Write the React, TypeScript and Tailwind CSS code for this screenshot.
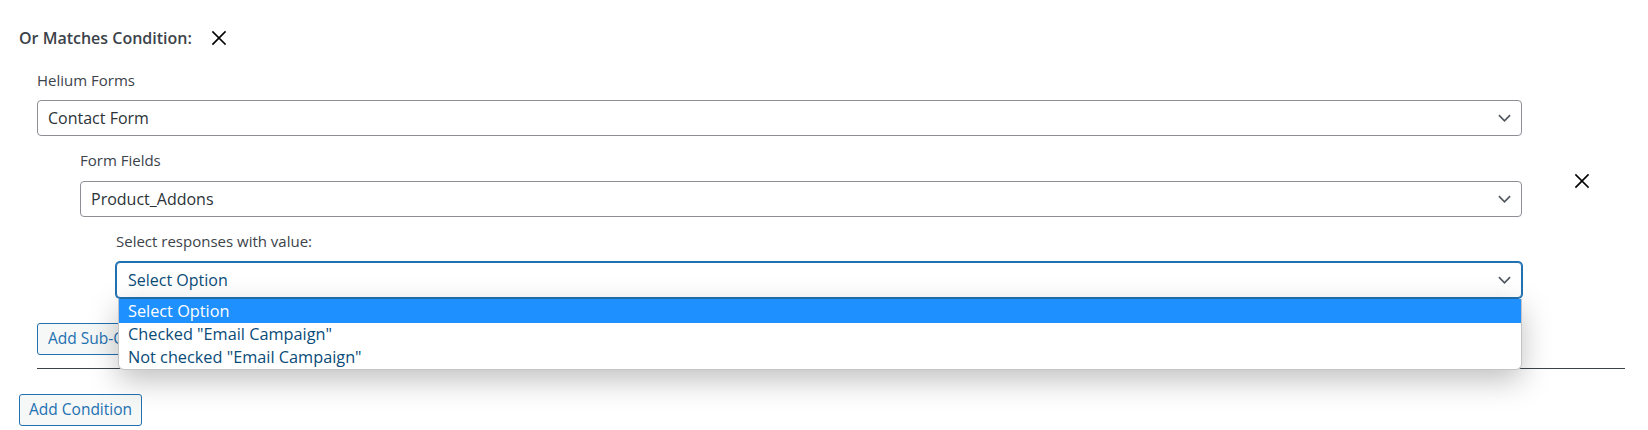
import React from "react";

function CloseIcon({ className }: { className?: string }) {
  return (
    <svg viewBox="0 0 16 16" className={className} fill="none" stroke="currentColor" strokeWidth="1.7" strokeLinecap="square">
      <path d="M2 2L14 14M14 2L2 14" />
    </svg>
  );
}

function Chevron() {
  return (
    <svg viewBox="0 0 14 8" className="w-[13px] h-[8px] text-[#50575e]" fill="none" stroke="currentColor" strokeWidth="1.8">
      <path d="M1 1L7 7L13 1" />
    </svg>
  );
}

function SelectBox({ value, focused }: { value: string; focused?: boolean }) {
  return (
    <div
      className={
        focused
          ? "flex items-center justify-between h-[36px] pl-[11px] pr-[10px] rounded-[4px] border border-[#2271b1] shadow-[0_0_0_1px_#2271b1] bg-white text-[16px] text-[#0a4b78]"
          : "flex items-center justify-between h-[36px] pl-[10px] pr-[10px] rounded-[4px] border border-[#8c8f94] bg-white text-[16px] text-[#2c3338]"
      }
    >
      <span>{value}</span>
      <Chevron />
    </div>
  );
}

const options = ["Select Option", 'Checked "Email Campaign"', 'Not checked "Email Campaign"'];

export default function App() {
  return (
    <div className="w-[1648px] h-[430px] bg-white pl-[19px] pt-[24px] font-['Open_Sans',sans-serif] overflow-hidden">
      {/* Heading */}
      <div className="flex items-center h-[28px]">
        <span className="text-[16px] font-semibold text-[#3c434a]">Or Matches Condition:</span>
        <CloseIcon className="w-[16px] h-[16px] ml-[19px] text-black" />
      </div>

      {/* Condition block */}
      <div className="ml-[18px] mt-[18px] w-[1588px]">
        <div className="flex">
          <div className="w-[1485px]">
            <div className="text-[15px] text-[#3c434a] h-[20px] leading-[20px]">Helium Forms</div>
            <div className="mt-[10px]">
              <SelectBox value="Contact Form" />
            </div>

            <div className="ml-[43px] mt-[14px]">
              <div className="text-[15px] text-[#3c434a] h-[20px] leading-[20px]">Form Fields</div>
              <div className="mt-[11px]">
                <SelectBox value="Product_Addons" />
              </div>

              <div className="ml-[36px] mt-[14px]">
                <div className="text-[15px] text-[#3c434a] h-[20px] leading-[20px]">Select responses with value:</div>
                <div className="relative mt-[11px]">
                  <SelectBox value="Select Option" focused />
                  {/* open dropdown */}
                  <div className="absolute left-[2px] right-0 top-[37px] z-10 bg-white rounded-b-[6px] border border-[#c3c4c7] border-t-0 shadow-[0_10px_30px_rgba(0,0,0,0.25)] overflow-hidden text-[16.3px] text-[#0a4b78]">
                    {options.map((o, i) => (
                      <div
                        key={o}
                        className={
                          i === 0
                            ? "h-[24px] leading-[24px] pl-[9px] bg-[#1e90ff] text-white"
                            : "h-[23px] leading-[23px] pl-[9px]"
                        }
                      >
                        {o}
                      </div>
                    ))}
                  </div>
                </div>
              </div>
            </div>
          </div>
          <div className="pt-[103px] pl-[52px]">
            <CloseIcon className="w-[16px] h-[16px] text-black" />
          </div>
        </div>

        <div className="mt-[25px]">
          <button className="h-[32px] px-[10px] rounded-[3px] border border-[#2271b1] bg-[#f6f7f7] text-[15.5px] text-[#2271b1]">
            Add Sub-Condition
          </button>
        </div>
        <div className="mt-[13px] h-px bg-[#3c434a]" />
      </div>

      <div className="mt-[25px]">
        <button className="h-[32px] px-[9px] rounded-[3px] border border-[#2271b1] bg-[#f6f7f7] text-[15.5px] text-[#2271b1]">
          Add Condition
        </button>
      </div>
    </div>
  );
}
